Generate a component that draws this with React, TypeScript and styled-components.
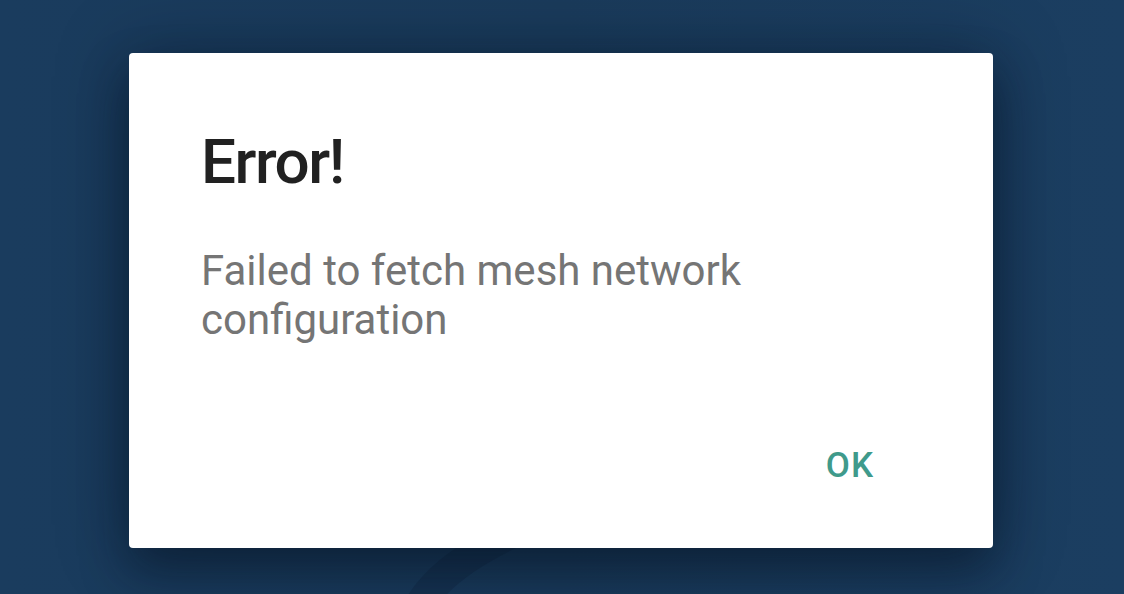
import React from "react";
import styled, { createGlobalStyle } from "styled-components";

const GlobalStyle = createGlobalStyle`
  html, body {
    margin: 0;
    padding: 0;
    height: 100%;
  }
  body {
    font-family: Roboto, "Noto Sans", "Liberation Sans", sans-serif;
    background: #1b3d5f;
    overflow: hidden;
  }
`;

const Screen = styled.div`
  position: relative;
  height: 594px;
  display: flex;
  justify-content: flex-start;
  align-items: flex-start;
  padding: 53px 0 0 129px;
  box-sizing: border-box;
  background: linear-gradient(90deg, #1a3c5e 0%, #1a3b5b 50%, #1b3e61 100%);
  overflow: hidden;
`;

const Backdrop = styled.svg`
  position: absolute;
  left: 0;
  top: 0;
  width: 1124px;
  height: 594px;
  pointer-events: none;
`;

const Dialog = styled.div`
  position: relative;
  width: 864px;
  height: 495px;
  box-sizing: border-box;
  background: #ffffff;
  border-radius: 4px;
  box-shadow: 0 24px 48px rgba(5, 15, 30, 0.45), 0 0 70px rgba(5, 15, 30, 0.35);
  padding: 73px 94px 52px 72px;
  display: flex;
  flex-direction: column;
`;

const Title = styled.h2`
  margin: 0;
  font-size: 62px;
  line-height: 72px;
  font-weight: 500;
  color: #212121;
  letter-spacing: -1.5px;
`;

const Message = styled.p`
  margin: 48px 0 0;
  font-size: 42px;
  line-height: 49px;
  font-weight: 400;
  color: #757575;
  max-width: 560px;
`;

const Actions = styled.div`
  margin-top: auto;
  display: flex;
  justify-content: flex-end;
`;

const TextButton = styled.button`
  border: none;
  background: transparent;
  padding: 12px 25px 12px 24px;
  font-family: inherit;
  font-size: 35px;
  line-height: 36px;
  font-weight: 500;
  color: #3f9a8b;
  cursor: pointer;
  letter-spacing: 1px;
`;

export default function App() {
  return (
    <>
      <GlobalStyle />
      <Screen>
        <Backdrop viewBox="0 0 1124 594">
          <path
            d="M420 604 C 432 585, 455 560, 515 532"
            stroke="#0d203c"
            strokeWidth="30"
            fill="none"
            opacity="0.3"
          />
        </Backdrop>
        <Dialog>
          <Title>Error!</Title>
          <Message>Failed to fetch mesh network configuration</Message>
          <Actions>
            <TextButton>OK</TextButton>
          </Actions>
        </Dialog>
      </Screen>
    </>
  );
}
